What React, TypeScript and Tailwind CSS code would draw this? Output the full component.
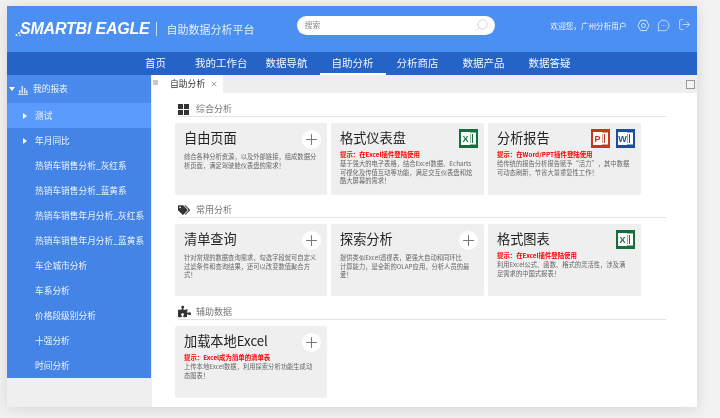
import React from 'react';
import { MessageCircleMore, LogOut, Search, Plus, X } from 'lucide-react';
import { FaTags, FaPuzzlePiece } from 'react-icons/fa';

const navItems = [
  { label: '首页', cls: 'ml-[131px] px-[7px]' },
  { label: '我的工作台', cls: 'ml-[15px] px-[7px]' },
  { label: '数据导航', cls: 'ml-[4px] px-[7px]' },
  { label: '自助分析', cls: 'ml-[5px] w-[66px] justify-center border-b-2 border-white pt-[2px]' },
  { label: '分析商店', cls: 'ml-[4px] px-[7px]' },
  { label: '数据产品', cls: 'ml-[10px] px-[7px]' },
  { label: '数据答疑', cls: 'ml-[10px] px-[7px]' },
];

const reports = [
  { label: '测试', arrow: true, active: true },
  { label: '年月同比', arrow: true },
  { label: '热销车销售分析_灰红系' },
  { label: '热销车销售分析_蓝黄系' },
  { label: '热销车销售年月分析_灰红系' },
  { label: '热销车销售年月分析_蓝黄系' },
  { label: '车企城市分析' },
  { label: '车系分析' },
  { label: '价格段级别分析' },
  { label: '十强分析' },
  { label: '时间分析' },
];

const OfficeIcon = ({ letter, color }: { letter: string; color: string }) => (
  <svg width="19" height="19" viewBox="0 0 19 19" className="shrink-0">
    <rect width="19" height="19" fill={color} />
    <rect x="7" y="3.5" width="10" height="12" fill="#fff" />
    <rect x="10.5" y="5" width="1" height="9" fill={color} />
    <rect x="13" y="5" width="1" height="9" fill={color} />
    <rect x="2" y="3" width="9" height="13" fill="#fff" />
    <text x="6.5" y="13" fontSize="9" fontWeight="700" textAnchor="middle" fill={color} fontFamily="Liberation Sans">{letter}</text>
  </svg>
);

const AddButton = () => (
  <div className="mt-[1px] flex h-[19px] w-[19px] shrink-0 items-center justify-center rounded-full bg-white text-[#777]">
    <Plus size={17} strokeWidth={1.5} />
  </div>
);

type CardProps = {
  title: string;
  tip?: string;
  lines: string[];
  width: string;
  icons?: React.ReactNode;
};

const Card = ({ title, tip, lines, width, icons }: CardProps) => (
  <div className={`h-[72px] ${width} rounded-[2px] bg-[#efefef] pl-[9px] pr-[6px] pt-[6px]`}>
    <div className="flex h-[21px] items-start justify-between">
      <span className="text-[13.2px] leading-[18px] text-[#222]">{title}</span>
      <div className="flex gap-[6px]">{icons ?? <AddButton />}</div>
    </div>
    <div className={tip ? 'mt-[1px]' : 'mt-[3px]'}>
      {tip && <div className="mb-[1px] whitespace-nowrap text-[6.4px] font-bold leading-[8px] text-[#ff0000]">{tip}</div>}
      {lines.map((l) => (
        <div key={l} className="whitespace-nowrap text-[6.3px] leading-[8.5px] text-[#666]">{l}</div>
      ))}
    </div>
  </div>
);

const SectionHead = ({ icon, label }: { icon: React.ReactNode; label: string }) => (
  <div className="ml-[3px] mr-[31px] flex h-[17px] items-end border-b border-[#e2e2e2]">
    <div className="flex w-[18px] justify-start pb-[1px] text-[#333]">{icon}</div>
    <span className="pb-[1px] text-[9px] leading-[12px] text-[#777]">{label}</span>
  </div>
);

export default function App() {
  return (
    <div
      className="h-[418px] w-[720px] overflow-hidden bg-[#f2f2f2] pl-[7px] pt-[6px] blur-[0.4px]"
      style={{ fontFamily: '"Noto Sans CJK SC", "Liberation Sans", sans-serif' }}
    >
      <div className="flex h-[401px] w-[690px] flex-col bg-white shadow-[0_2px_14px_rgba(0,0,0,0.12)]">
        {/* top bar */}
        <header className="flex h-[46px] shrink-0 items-center bg-[#4b8ff2] text-white">
          <svg width="8" height="10" viewBox="0 0 8 10" className="ml-[8px] mt-[6px]">
            <circle cx="1.5" cy="8" r="1" fill="#fff" />
            <circle cx="4" cy="6" r="1" fill="#fff" />
            <circle cx="6.5" cy="3" r="1" fill="#fff" />
            <circle cx="5" cy="8.5" r="0.8" fill="#fff" />
          </svg>
          <span
            className="-ml-[3px] whitespace-nowrap text-[16px] font-bold italic leading-none tracking-[-0.2px]"
            style={{ fontFamily: '"Liberation Sans", sans-serif' }}
          >
            SMARTBI EAGLE
          </span>
          <div className="ml-[6px] h-[14px] w-px bg-white/70" />
          <span className="ml-[10px] whitespace-nowrap text-[11px] text-[#e4eefd]">自助数据分析平台</span>
          <div className="mb-[8px] ml-[42px] flex h-[19px] w-[198px] items-center justify-between rounded-full bg-white pl-[8px] pr-[6px]">
            <span className="text-[8px] text-[#888]">搜索</span>
            <Search size={14} strokeWidth={1.2} className="text-[#c4c4c4]" style={{ transform: 'scaleX(-1)' }} />
          </div>
          <span className="mb-[7px] ml-[56px] whitespace-nowrap text-[7.6px] text-[#eef4fe]">欢迎您，广州分析用户</span>
          <svg width="13" height="13" viewBox="0 0 14 14" fill="none" stroke="#dfeafd" strokeWidth="1" className="mb-[8px] ml-[10px]">
            <path d="M4 1.5h6L13 7l-3 5.5H4L1 7z" />
            <circle cx="7" cy="7" r="2.2" />
          </svg>
          <MessageCircleMore size={13} strokeWidth={1.3} className="mb-[8px] ml-[7px] text-[#eef4fe]" />
          <LogOut size={13} strokeWidth={1.3} className="mb-[10px] ml-[8px] text-[#eef4fe]" />
        </header>

        {/* main nav */}
        <nav className="flex h-[23px] shrink-0 items-stretch bg-[#2564c6] text-[10.5px] text-[#f2f6fe]">
          {navItems.map((n) => (
            <div key={n.label} className={`flex items-center whitespace-nowrap pb-[2px] ${n.cls}`}>{n.label}</div>
          ))}
        </nav>

        <div className="flex min-h-0 flex-1">
          {/* left tree */}
          <aside className="flex w-[145px] shrink-0 flex-col bg-[#efefef]">
            <div className="h-[303px] w-[144px] bg-[#4484e6] text-[8.7px] text-[#eef4fe]">
              <div className="flex h-[28px] items-center bg-[#4a8aec] pl-[2px]">
                <span className="h-0 w-0 border-x-[3px] border-t-[4px] border-x-transparent border-t-white" />
                <svg width="10" height="11" viewBox="0 0 10 11" fill="#cfe0fb" className="ml-[3px]">
                  <rect x="1" y="6" width="1.5" height="3.5" />
                  <rect x="3.5" y="2" width="1.5" height="7.5" />
                  <rect x="6" y="4" width="1.5" height="5.5" />
                  <rect x="8" y="6.5" width="1.5" height="3" />
                  <rect y="10" width="10" height="1" />
                </svg>
                <span className="ml-[5px]">我的报表</span>
              </div>
              {reports.map((r) => (
                <div
                  key={r.label}
                  className={`flex h-[25px] items-center whitespace-nowrap pl-[16px] ${r.active ? 'bg-[#5b9bfd]' : ''}`}
                >
                  <span className="w-[12px]">
                    {r.arrow && (
                      <span className="block h-0 w-0 border-y-[3px] border-l-[4px] border-y-transparent border-l-white" />
                    )}
                  </span>
                  {r.label}
                </div>
              ))}
            </div>
          </aside>

          {/* workspace */}
          <main className="min-w-0 flex-1">
            <div className="flex h-[18px] items-stretch bg-[#eeeeee]">
              <div className="flex w-[11px] items-start bg-white pl-[1px] pt-[5px]">
                <div className="h-[5px] w-[5px] bg-[#c8c8c8]" />
              </div>
              <div className="flex w-[60px] items-center bg-white pl-[7px] text-[8.8px] text-[#333]">
                自助分析
                <X size={8} strokeWidth={1.5} className="ml-[5px] text-[#444]" />
              </div>
              <div className="ml-auto mr-[2px] mt-[5px] h-[9px] w-[9px] border border-[#999] bg-[#f4f4f4]" />
            </div>

            <div className="pl-[23px] pt-[7px]">
              <SectionHead
                label="综合分析"
                icon={
                  <div className="grid grid-cols-2 gap-[1px]">
                    <div className="h-[5px] w-[5px] bg-[#333]" />
                    <div className="h-[5px] w-[5px] bg-[#333]" />
                    <div className="h-[5px] w-[5px] bg-[#333]" />
                    <div className="h-[5px] w-[5px] bg-[#333]" />
                  </div>
                }
              />
              <div className="mt-[6px] flex gap-[4px]">
                <Card
                  title="自由页面"
                  width="w-[152px]"
                  lines={['综合各种分析资源，以及外部链接，组成数据分', '析页面，满足驾驶舱仪表盘的需求！']}
                />
                <Card
                  title="格式仪表盘"
                  width="w-[153px]"
                  tip="提示：在Excel插件登陆使用"
                  icons={<OfficeIcon letter="X" color="#14703a" />}
                  lines={['基于强大的电子表格，结合Excel数据、Echarts', '可视化及传值互动等功能，满足交互仪表盘和炫', '酷大屏幕的需求！']}
                />
                <Card
                  title="分析报告"
                  width="w-[153px]"
                  tip="提示：在Word/PPT插件登陆使用"
                  icons={
                    <>
                      <OfficeIcon letter="P" color="#c8381a" />
                      <OfficeIcon letter="W" color="#1c4e9c" />
                    </>
                  }
                  lines={['给传统的报告分析报告赋予“活力”，其中数据', '可动态刷新，节省大量重复性工作！']}
                />
              </div>

              <div className="mt-[6px]">
                <SectionHead label="常用分析" icon={<FaTags size={12} />} />
              </div>
              <div className="mt-[6px] flex gap-[4px]">
                <Card
                  title="清单查询"
                  width="w-[152px]"
                  lines={['针对常规的数据查询需求，勾选字段就可自定义', '过滤条件和查询结果，还可以改变数值聚合方', '式！']}
                />
                <Card
                  title="探索分析"
                  width="w-[153px]"
                  lines={['提供类似Excel透视表，更强大自动和同环比', '计算能力，是全新的OLAP应用，分析人员的最', '爱！']}
                />
                <Card
                  title="格式图表"
                  width="w-[153px]"
                  tip="提示：在Excel插件登陆使用"
                  icons={<OfficeIcon letter="X" color="#14703a" />}
                  lines={['利用Excel公式、函数、格式的灵活性，涉及满', '足需求的中国式报表！']}
                />
              </div>

              <div className="mt-[7px]">
                <SectionHead label="辅助数据" icon={<FaPuzzlePiece size={13} />} />
              </div>
              <div className="mt-[6px] flex gap-[4px]">
                <Card
                  title="加载本地Excel"
                  width="w-[152px]"
                  tip="提示：Excel成为简单的清单表"
                  lines={['上传本地Excel数据，利用探索分析功能生成动', '态图表！']}
                />
              </div>
            </div>
          </main>
        </div>
      </div>
    </div>
  );
}
